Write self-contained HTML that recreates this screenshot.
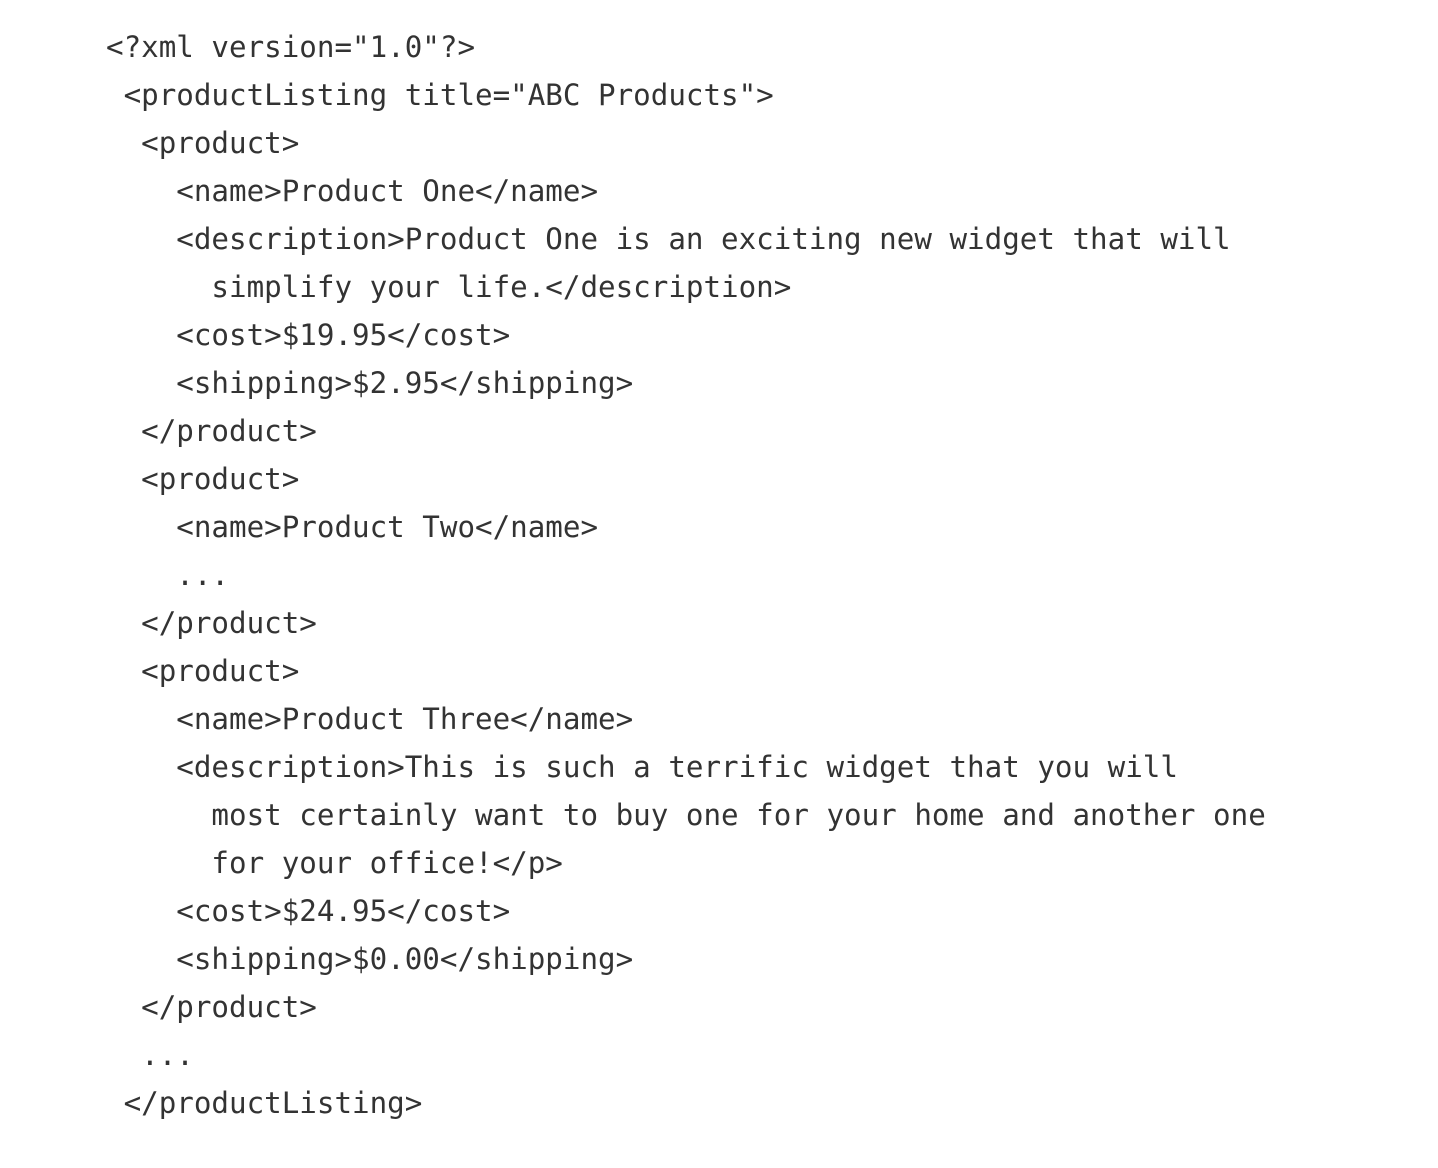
<!DOCTYPE html>
<html><head><meta charset="utf-8"><style>
html,body{margin:0;padding:0;background:#fff;width:1438px;height:1168px;overflow:hidden}
pre{position:absolute;left:106px;top:23px;margin:0;font-family:"DejaVu Sans Mono","Liberation Mono",monospace;font-size:29.2px;line-height:48px;color:#333;white-space:pre}
</style></head><body>
<pre>&lt;?xml version="1.0"?&gt;
 &lt;productListing title="ABC Products"&gt;
  &lt;product&gt;
    &lt;name&gt;Product One&lt;/name&gt;
    &lt;description&gt;Product One is an exciting new widget that will
      simplify your life.&lt;/description&gt;
    &lt;cost&gt;$19.95&lt;/cost&gt;
    &lt;shipping&gt;$2.95&lt;/shipping&gt;
  &lt;/product&gt;
  &lt;product&gt;
    &lt;name&gt;Product Two&lt;/name&gt;
    ...
  &lt;/product&gt;
  &lt;product&gt;
    &lt;name&gt;Product Three&lt;/name&gt;
    &lt;description&gt;This is such a terrific widget that you will
      most certainly want to buy one for your home and another one
      for your office!&lt;/p&gt;
    &lt;cost&gt;$24.95&lt;/cost&gt;
    &lt;shipping&gt;$0.00&lt;/shipping&gt;
  &lt;/product&gt;
  ...
 &lt;/productListing&gt;</pre>
</body></html>
